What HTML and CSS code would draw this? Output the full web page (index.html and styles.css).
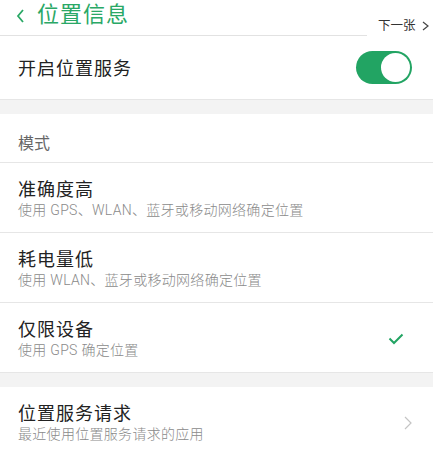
FILE: index.html
```html
<!DOCTYPE html>
<html lang="zh-CN">
  <head>
    <meta charset="UTF-8" />
    <meta name="viewport" content="width=device-width, initial-scale=1.0" />
    <title>位置信息</title>
    <link rel="stylesheet" href="styles.css">
  </head>
  <body>
    <header class="topbar">
      <svg class="back" width="9" height="14" viewBox="0 0 9 14">
        <polyline points="7,1 2,7 7,13" fill="none" stroke="#2aa866" stroke-width="1.8" />
      </svg>
      <h1>位置信息</h1>
    </header>
    <div class="next-tip">
      下一张
      <svg width="7" height="10" viewBox="0 0 7 10">
        <polyline points="1,1 6,5 1,9" fill="none" stroke="#444" stroke-width="1.2" />
      </svg>
    </div>

    <div class="row switch-row">
      <span class="label">开启位置服务</span>
      <span class="toggle"><span class="knob"></span></span>
    </div>

    <div class="gap"></div>

    <div class="section-title">模式</div>

    <div class="row item">
      <div>
        <div class="label">准确度高</div>
        <div class="sub">使用 GPS、WLAN、蓝牙或移动网络确定位置</div>
      </div>
    </div>
    <div class="row item">
      <div>
        <div class="label">耗电量低</div>
        <div class="sub">使用 WLAN、蓝牙或移动网络确定位置</div>
      </div>
    </div>
    <div class="row item">
      <div>
        <div class="label">仅限设备</div>
        <div class="sub">使用 GPS 确定位置</div>
      </div>
      <svg class="check" width="16" height="12" viewBox="0 0 16 12">
        <polyline points="1.5,5.5 6,10 14.5,1.5" fill="none" stroke="#22a463" stroke-width="2" />
      </svg>
    </div>

    <div class="gap"></div>

    <div class="row item last">
      <div>
        <div class="label">位置服务请求</div>
        <div class="sub">最近使用位置服务请求的应用</div>
      </div>
      <svg class="arrow" width="8" height="14" viewBox="0 0 8 14">
        <polyline points="1,1 7,7 1,13" fill="none" stroke="#c4c4c4" stroke-width="1.2" />
      </svg>
    </div>
  </body>
</html>
```

FILE: styles.css
```css
body {
  font-family: Roboto, "Noto Sans CJK SC", sans-serif;
  background-color: #fff;
  margin: 0;
  padding: 0;
  color: #222;
  position: relative;
}

.topbar {
  display: flex;
  align-items: flex-start;
  height: 36px;
  padding: 3px 0 0 16px;
  box-sizing: border-box;
  border-bottom: 1px solid #e2e2e2;
}

.back {
  margin-top: 6px;
  margin-right: 12px;
}

.topbar h1 {
  margin: 0;
  font-size: 22px;
  line-height: 24px;
  font-weight: 400;
  letter-spacing: 1px;
  color: #2aa866;
}

.next-tip {
  position: absolute;
  top: 12px;
  right: 0;
  width: 66px;
  height: 28px;
  box-sizing: border-box;
  padding-left: 11px;
  background-color: #fff;
  font-size: 12.5px;
  line-height: 28px;
  color: #333;
}

.next-tip svg {
  margin-left: 3px;
  vertical-align: -1px;
}

.row {
  display: flex;
  align-items: center;
  justify-content: space-between;
  padding: 0 21px 0 18px;
  border-bottom: 1px solid #e6e6e6;
}

.label {
  font-size: 18px;
  line-height: 22px;
  letter-spacing: 1px;
}

.switch-row {
  height: 63px;
}

.switch-row .label {
  margin-top: 3px;
}

.toggle {
  width: 56px;
  height: 33px;
  border-radius: 17px;
  background-color: #22a463;
  display: flex;
  align-items: center;
  justify-content: flex-end;
  padding-right: 2px;
  box-sizing: border-box;
}

.knob {
  width: 29px;
  height: 29px;
  border-radius: 50%;
  background-color: #fff;
}

.gap {
  height: 14px;
  background-color: #f3f3f3;
}

.section-title {
  padding: 20px 18px 8px;
  font-size: 16px;
  line-height: 20px;
  color: #666;
  border-bottom: 1px solid #e6e6e6;
}

.item {
  padding-top: 16px;
  padding-bottom: 13px;
}

.sub {
  font-size: 14px;
  line-height: 18px;
  font-weight: 300;
  letter-spacing: 0.3px;
  color: #8a8a8a;
}

.check {
  margin-right: 8px;
}

.last {
  border-bottom: none;
}
```
